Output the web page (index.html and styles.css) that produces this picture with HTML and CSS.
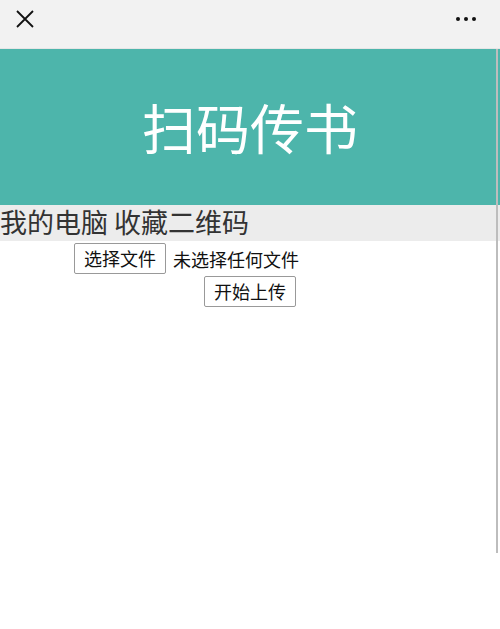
FILE: index.html
```html
<!DOCTYPE html>
<html lang="zh-CN">
<head>
    <meta charset="UTF-8">
    <meta name="viewport" content="width=device-width, initial-scale=1.0">
    <title>扫码传书</title>
    <link rel="stylesheet" href="styles.css">
</head>
<body>
    <div class="top-bar">
        <svg class="close-icon" width="20" height="20" viewBox="0 0 20 20">
            <path d="M2 2 L18 18 M18 2 L2 18" stroke="#111" stroke-width="1.8" fill="none"/>
        </svg>
        <div class="more-dots">
            <span></span><span></span><span></span>
        </div>
    </div>

    <div class="banner">
        <h1>扫码传书</h1>
    </div>

    <!-- tabs under banner -->
    <div class="nav-bar">我的电脑 收藏二维码</div>

    <form class="upload-form">
        <div class="file-row">
            <div class="file-pick">
                <label class="btn" for="fileInput">选择文件</label>
                <span class="file-name">未选择任何文件</span>
                <input type="file" id="fileInput" class="file-input">
            </div>
        </div>
        <div class="submit-row">
            <button type="button" class="btn">开始上传</button>
        </div>
    </form>

    <div class="scroll-line"></div>
</body>
</html>
```

FILE: styles.css
```css
* {
    margin: 0;
    padding: 0;
    box-sizing: border-box;
}

body {
    background-color: #ffffff;
    color: #222;
    font-family: "Noto Sans CJK SC", "Noto Sans", sans-serif;
    position: relative;
    min-height: 629px;
}

.top-bar {
    height: 49px;
    background-color: #f2f2f2;
    display: flex;
    align-items: center;
    justify-content: space-between;
    padding: 0 24px 0 15px;
    border-bottom: 1px solid #e6e6e6;
}

.close-icon {
    display: block;
    margin-top: -10px;
}

.more-dots {
    display: flex;
    gap: 4px;
    margin-top: -10px;
}

.more-dots span {
    width: 4px;
    height: 4px;
    border-radius: 50%;
    background-color: #111;
}

.banner {
    height: 156px;
    background-color: #4db5ab;
    display: flex;
    align-items: center;
    justify-content: center;
}

.banner h1 {
    color: #ffffff;
    font-size: 54px;
    font-weight: normal;
    line-height: 1;
    margin-top: 0;
}

.nav-bar {
    height: 36px;
    background-color: #ececec;
    font-size: 27px;
    line-height: 34px;
    color: #333;
    white-space: nowrap;
}

.upload-form {
    padding-top: 2px;
}

.file-row {
    display: flex;
    justify-content: center;
}

.file-pick {
    width: 352px;
    display: flex;
    align-items: center;
    gap: 7px;
}

.file-input {
    display: none;
}

.btn {
    display: inline-block;
    height: 31px;
    padding: 0 9px;
    font-family: "Noto Sans CJK SC", "Noto Sans", sans-serif;
    font-size: 18px;
    line-height: 29px;
    color: #111;
    background-color: #ffffff;
    border: 1px solid #999;
    border-radius: 2px;
    cursor: pointer;
}

.file-name {
    font-size: 18px;
    color: #111;
}

.submit-row {
    display: flex;
    justify-content: center;
    margin-top: 2px;
}

.scroll-line {
    position: absolute;
    top: 49px;
    right: 2px;
    width: 2px;
    height: 504px;
    background-color: #bdbdbd;
}
```
